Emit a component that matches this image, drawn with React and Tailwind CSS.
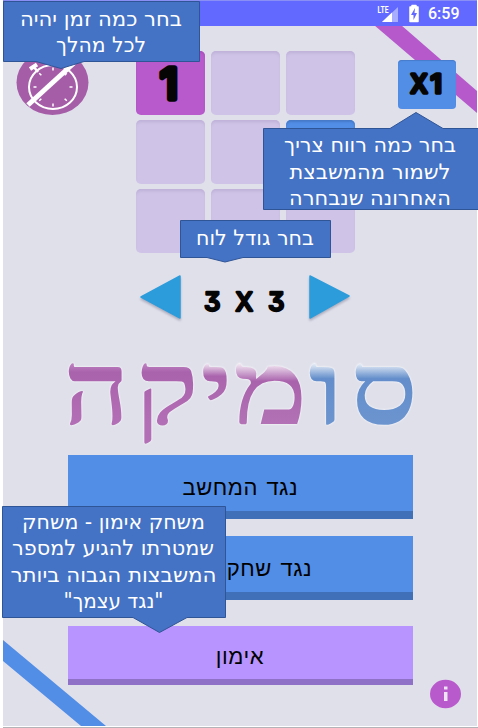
import React from 'react';

const tooltipFont = "font-['DejaVu_Sans',sans-serif]";

// Speech bubble with a pointer; every line is stretched to its own width.
function Callout({ box, width, height, points, lines }) {
  return (
    <div className={`absolute ${box}`}>
      <svg className="overflow-visible" width={width} height={height}>
        <polygon points={points} fill="#4472c4" stroke="#2f5597" strokeWidth="1" />
        {lines.map(([text, x, y, w]) => (
          <text
            key={text}
            x={x}
            y={y}
            textAnchor="middle"
            direction="rtl"
            textLength={w}
            lengthAdjust="spacingAndGlyphs"
            fontSize="21"
            fill="#fff"
            className={tooltipFont}
          >
            {text}
          </text>
        ))}
      </svg>
    </div>
  );
}

function Tile({ color }) {
  return <div className={`h-16 w-[69px] rounded-[5px] ${color}`} />;
}

const plain = 'bg-[#cfc3e7] shadow-[inset_0_3px_3px_-1px_#bfb1d8]';

function Timer() {
  const ticks = [0, 45, 90, 135, 180, 225, 270, 315];
  return (
    <svg className="mt-[24px] ml-[13px] shrink-0" width="73" height="66" viewBox="0 0 73 66">
      <ellipse cx="36.5" cy="32.5" rx="36" ry="32.5" fill="#a55da8" />
      <g stroke="#fff" fill="none">
        <ellipse cx="37" cy="37" rx="24" ry="22" strokeWidth="2" />
        {ticks.map((a) => (
          <path key={a} d="M37 17.5v3" transform={`rotate(${a} 37 37)`} strokeWidth="1.5" />
        ))}
        <path d="M14 19l7-4.500" strokeWidth="4" />
        <path d="M17 16l5 6" strokeWidth="2.5" />
        <path d="M12 55L58 13" strokeWidth="5" />
      </g>
    </svg>
  );
}

// Rounded lettering: each entry is [character, x, width].
function Lettering({ glyphs, y, size, stroke, weight = 500, ...rest }) {
  return (
    <svg {...rest}>
      {glyphs.map(([c, x, w]) => (
        <text
          key={x}
          x={x}
          y={y}
          textLength={w}
          lengthAdjust="spacingAndGlyphs"
          fontSize={size}
          fontWeight={weight}
          fill="#050505"
          stroke="#050505"
          strokeWidth={stroke}
          strokeLinejoin="round"
          className="font-['Inter',sans-serif] [font-feature-settings:'cv09']"
        >
          {c}
        </text>
      ))}
    </svg>
  );
}

function Arrow({ d }) {
  return (
    <svg width="42" height="48" viewBox="0 0 42 48" className="drop-shadow-[0_2px_1px_#8b8ba099]">
      <path d={d} fill="#2d9cdb" stroke="#2d9cdb" strokeWidth="1.5" strokeLinejoin="round" />
    </svg>
  );
}

function Fade({ id, top, mid, end, at }) {
  return (
    <linearGradient id={id} gradientUnits="userSpaceOnUse" x1="0" x2="0" y1="12" y2="75">
      <stop offset="0" stopColor={top} />
      <stop offset={at} stopColor={mid} />
      <stop offset="1" stopColor={end} />
    </linearGradient>
  );
}

function Logo() {
  const letters = [
    ['ס', 350, 418, 'url(#blueFade)'],
    ['ו', 308, 345, 'url(#blueFade)'],
    ['מ', 233, 308, 'url(#pinkFade)'],
    ['י', 200, 233, 'url(#pinkFade2)'],
    ['ק', 135, 199, 'url(#pink)'],
    ['ה', 63, 130, 'url(#pink)'],
  ];
  return (
    <svg width="358" height="100" viewBox="62 0 358 100" className="overflow-visible drop-shadow-[0_0_1px_#ffffff]">
      <defs>
        <Fade id="blueFade" top="#ffffff" mid="#638ecb" end="#6c95cf" at="0.28" />
        <Fade id="pinkFade" top="#ffffff" mid="#a962ac" end="#b272b5" at="0.32" />
        <Fade id="pinkFade2" top="#ffffff" mid="#aa64ad" end="#b272b5" at="0.24" />
        <Fade id="pink" top="#c48bc8" mid="#a962ac" end="#b36fb5" at="0.18" />
      </defs>
      {letters.map(([c, a, b, fill]) => (
        <text
          key={c}
          x={a}
          y="75"
          textLength={b - a}
          lengthAdjust="spacingAndGlyphs"
          fontSize="103"
          fill={fill}
          className="font-['Liberation_Serif',serif] font-bold"
        >
          {c}
        </text>
      ))}
    </svg>
  );
}

function MenuButton({ color, children }) {
  return (
    <button
      dir="rtl"
      className={`flex w-[345px] items-center text-[22px] leading-none tracking-[0.5px] text-black [word-spacing:2px] font-['Liberation_Sans',sans-serif] ${color}`}
    >
      {children}
    </button>
  );
}

export default function App() {
  return (
    <div className="relative h-[728px] w-[478px] overflow-hidden bg-white pl-[3px]">
      <div className="relative flex h-[726px] w-[474px] flex-col overflow-hidden bg-[#e0e0eb]">
        <svg className="absolute left-0 top-0" width="474" height="726">
          <path d="M371 25h27L474 91v22z" fill="#b65acb" />
          <path d="M0 640L103 726H78L0 661z" fill="#528ee6" />
        </svg>

        <header className="relative flex h-[26px] shrink-0 items-center border-t border-[#8a8ff5] bg-[#6169ff] pl-[374px] text-white">
          <svg width="62" height="24" viewBox="0 0 62 24">
            <text x="0.5" y="11" fontSize="8.5" fontWeight="700" textLength="11" lengthAdjust="spacingAndGlyphs" fill="#fff" className="font-['Roboto',sans-serif]">LTE</text>
            <path d="M21 5v15H5z" fill="#a9adff" />
            <path d="M15 10.500v9.500H5z" fill="#fff" />
            <path d="M33 5h2V3.500h4V5h2v14.500h-8z" fill="#fff" stroke="#fff" strokeWidth="1.500" strokeLinejoin="round" />
            <path d="M38 6l-4 7h2.500v5l3.500-7h-2.500z" fill="#6169ff" />
          </svg>
          <span className="-ml-[11px] mt-px font-['Roboto',sans-serif] text-[16px] font-medium">6:59</span>
        </header>

        <main className="relative flex flex-col">
          <div className="flex h-[227px] items-start">
            <Timer />
            <div className="ml-[47px] mt-[25px] grid grid-cols-3 gap-x-1.5 gap-y-[5px]">
              <div className="h-16 w-[69px] rounded-[5px] bg-[#b85acb] shadow-[inset_0_2px_2px_#a853bd]">
                <Lettering width="69" height="64" glyphs={[['1', 24, 18]]} y="47.500" size="42" stroke="5.5" />
              </div>
              <Tile color={plain} />
              <Tile color={plain} />
              <Tile color={plain} />
              <Tile color={plain} />
              <Tile color="bg-[#528ee6] shadow-[inset_0_2px_2px_#477bc9]" />
              <Tile color={plain} />
              <Tile color={plain} />
              <Tile color={plain} />
            </div>
            <div className="ml-[43px] mt-[34px] h-[49px] w-[58px] rounded-[4px] bg-[#528ee6] shadow-[inset_0_1px_1px_#477bc9]">
              <Lettering width="58" height="49" glyphs={[['X', 12.5, 17], ['1', 32.5, 11.5]]} y="32.500" size="25" stroke="3.4" />
            </div>
          </div>

          <div className="flex h-[96px] items-start pl-[136px] pt-[21px]">
            <Arrow d="M2 23L41 2V44Z" />
            <Lettering className="mx-[22px]" width="84" height="48" glyphs={[['3', 1, 16.5], ['X', 32.5, 17.5], ['3', 65, 16.5]]} y="36.500" size="26" stroke="2.4" />
            <Arrow d="M1 2L40 22L1 44Z" />
          </div>

          <div className="flex h-[106px] items-start pl-[59px]">
            <Logo />
          </div>

          <nav className="flex flex-col pl-[65px]">
            <MenuButton color="h-16 border-b-8 border-[#4070b8] bg-[#528ee6] pr-[115px] pt-2.5">נגד המחשב</MenuButton>
            <div className="h-[17px]" />
            <MenuButton color="h-16 border-b-8 border-[#4070b8] bg-[#528ee6] pr-[101px] pt-2.5">נגד שחקן</MenuButton>
            <div className="h-[26px]" />
            <MenuButton color="h-[59px] border-b-6 border-[#8f72c7] bg-[#b794ff] pr-[149px] pt-2">אימון</MenuButton>
          </nav>
        </main>

        <svg className="absolute left-[426px] top-[679px]" width="33" height="30" viewBox="0 0 33 30">
          <ellipse cx="16.500" cy="15" rx="15.500" ry="14.300" fill="#b85acb" />
          <path d="M15 7.500h3.500v3H15zM15 13h3.500v9H15z" fill="#eee4f5" />
        </svg>
      </div>
      <div className="mt-px h-px bg-[#b4b4b8]" />

      <Callout
        box="left-[3px] top-px"
        width={197}
        height={68}
        points="0.5,0.5 196.500,0.5 196.500,60.500 81,60.500 58,67.500 33,60.500 0.5,60.500"
        lines={[
          ['בחר כמה זמן יהיה', 98, 25, 162],
          ['לכל מהלך', 98, 51, 90],
        ]}
      />
      <Callout
        box="left-[263px] top-[112px]"
        width={216}
        height={98}
        points="0.5,16.500 127,16.500 153,0.5 180,16.500 220,16.500 220,97.500 0.5,97.500"
        lines={[
          ['בחר כמה רווח צריך', 107, 40, 172],
          ['לשמור מהמשבצת', 107, 67, 161],
          ['האחרונה שנבחרה', 107, 93, 162],
        ]}
      />
      <Callout
        box="left-[180px] top-[220px]"
        width={151}
        height={43}
        points="0.5,0.5 150.500,0.5 150.500,37.500 63,37.500 45,42 27,37.500 0.5,37.500"
        lines={[['בחר גודל לוח', 75, 25, 118]]}
      />
      <Callout
        box="left-[2px] top-[506px]"
        width={224}
        height={127}
        points="0.5,0.5 223.500,0.5 223.500,111.500 185,111.500 157.500,126.500 131,111.500 0.5,111.500"
        lines={[
          ['משחק אימון - משחק', 111.5, 23, 183],
          ['שמטרתו להגיע למספר', 111, 49, 202],
          ['המשבצות הגבוה ביותר', 111.5, 76, 206],
          ['"נגד עצמך"', 111.5, 102, 100],
        ]}
      />
    </div>
  );
}
